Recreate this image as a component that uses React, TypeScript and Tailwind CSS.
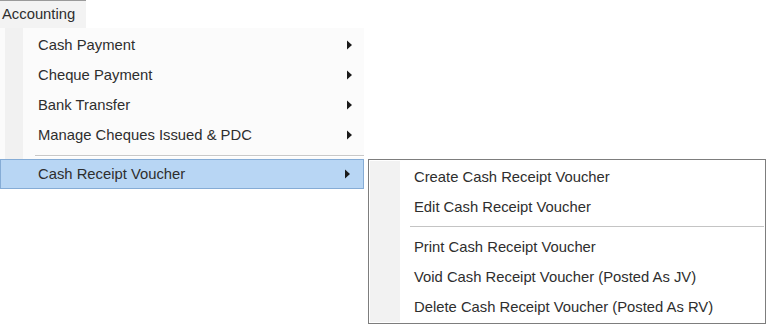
import React from "react";

const Arrow = () => (
  <svg width="7" height="10" viewBox="0 0 7 10" className="block">
    <path d="M1 0.5 L6 5 L1 9.5 Z" fill="#1a1a1a" />
  </svg>
);

const leftItems = ["Cash Payment", "Cheque Payment", "Bank Transfer", "Manage Cheques Issued & PDC"];

export default function App() {
  return (
    <div
      className="w-[768px] h-[326px] bg-white overflow-hidden text-[14.8px] text-[#2e2e2e]"
      style={{ fontFamily: '"Liberation Sans", Arial, sans-serif' }}
    >
      <div className="w-[86px] h-[28px] border-t border-[#9a9a9a] bg-[#f3f3f3] flex items-center pl-[2px]">
        Accounting
      </div>
      <div className="flex items-start">
        <div className="w-[364px] flex flex-col">
          <div className="flex bg-[#fbfbfb]">
            <div className="w-[5px]" />
            <div className="w-[18px] bg-[#f1f1f1]" />
            <div className="flex-1 flex flex-col pt-[2px]">
              {leftItems.map((t) => (
                <div key={t} className="h-[30px] flex items-center pl-[15px] pr-[11px]">
                  <span className="flex-1">{t}</span>
                  <Arrow />
                </div>
              ))}
              <div className="h-[9px] flex flex-col justify-start pl-[12px]">
                <div className="h-px bg-[#c8c8c8] mt-[5px]" />
                <div className="h-px bg-white" />
              </div>
            </div>
          </div>
          <div className="h-[30px] bg-[#b8d6f4] border border-[#85acd6] flex items-center pl-[37px] pr-[12px]">
            <span className="flex-1">Cash Receipt Voucher</span>
            <Arrow />
          </div>
        </div>
        <div className="ml-[4px] mt-[131px] w-[398px] h-[165px] border border-[#7d7d7d] bg-white p-px">
          <div className="flex h-full bg-white">
            <div className="w-[30px] bg-[#f2f2f2]" />
            <div className="flex-1 flex flex-col pt-[1px]">
              {["Create Cash Receipt Voucher", "Edit Cash Receipt Voucher"].map((t) => (
                <div key={t} className="h-[31px] flex items-center pl-[14px]">
                  {t}
                </div>
              ))}
              <div className="h-[10px] flex flex-col justify-center pl-[10px]">
                <div className="h-px bg-[#c4c4c4]" />
                <div className="h-px bg-white" />
              </div>
              {[
                "Print Cash Receipt Voucher",
                "Void Cash Receipt Voucher (Posted As JV)",
                "Delete Cash Receipt Voucher (Posted As RV)",
              ].map((t) => (
                <div key={t} className="h-[31px] flex items-center pl-[14px]">
                  {t}
                </div>
              ))}
            </div>
          </div>
        </div>
      </div>
    </div>
  );
}
